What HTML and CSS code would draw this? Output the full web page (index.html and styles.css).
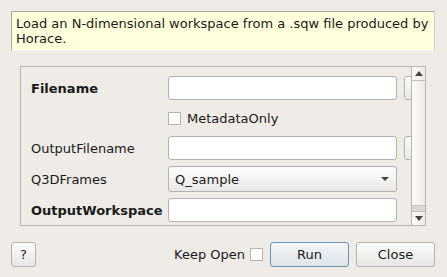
FILE: index.html
```html
<!DOCTYPE html>
<html lang="en">
<head>
  <meta charset="UTF-8" />
  <title>LoadSQW</title>
  <link rel="stylesheet" href="styles.css">
</head>
<body>
  <div class="desc">Load an N-dimensional workspace from a .sqw file produced by Horace.</div>

  <div class="scroll">
    <div class="viewport">
      <div class="form">
        <label class="bold">Filename</label>
        <input type="text" class="field">
        <button class="browse"></button>

        <span></span>
        <label class="check"><span class="box"></span>MetadataOnly</label>
        <span></span>

        <label>OutputFilename</label>
        <input type="text" class="field">
        <button class="browse"></button>

        <label>Q3DFrames</label>
        <div class="combo">Q_sample<span class="arrow"></span></div>
        <span></span>

        <label class="bold">OutputWorkspace</label>
        <input type="text" class="field">
        <span></span>
      </div>
    </div>
    <div class="scrollbar">
      <div class="sb-btn up"><span></span></div>
      <div class="sb-thumb"></div>
      <div class="sb-gap"></div>
      <div class="sb-btn down"><span></span></div>
    </div>
  </div>

  <div class="bottom">
    <button class="btn help">?</button>
    <span class="spacer"></span>
    <label class="keep">Keep Open<span class="box"></span></label>
    <button class="btn run">Run</button>
    <button class="btn">Close</button>
  </div>
</body>
</html>
```

FILE: styles.css
```css
* { box-sizing: border-box; }
body {
  margin: 0; background: #efebe7; color: #1a1a1a;
  font-family: 'DejaVu Sans', sans-serif; font-size: 13px;
  width: 447px; height: 277px; overflow: hidden;
}
.desc {
  margin: 11px 12px 0 11px; height: 40px; padding: 4px 4px 0 4px;
  line-height: 15px; background: #ffffdc;
  border: 1px solid #a8a8a8; border-right-color: #d0d0d0; border-bottom-color: #f6f6f6;
}
.scroll {
  margin: 15px 21px 0 20px; height: 160px;
  display: flex; border: 1px solid #b8b5b2;
}
.viewport {
  flex: 1; overflow: hidden; padding: 9px 0 0 10px;
}
.form {
  display: grid; grid-template-columns: 130px 229px 25px;
  grid-template-rows: 24px 24px 24px 26px 24px;
  row-gap: 6px; column-gap: 7px;
  width: 398px; align-items: center;
}
.form label { white-space: nowrap; }
.bold { font-weight: bold; }
.field {
  height: 24px; width: 229px; margin: 0;
  border: 1px solid #b4b1ae; border-radius: 3px; background: #fff;
}
.browse {
  height: 24px; width: 25px; margin: 0; padding: 0;
  border: 1px solid #b4b1ae; border-radius: 3px;
  background: linear-gradient(#fbfbfa, #ebe9e7);
}
.check { display: flex; align-items: center; gap: 6px; }
.box {
  display: inline-block; width: 13px; height: 13px;
  border: 1px solid #b4b1ae; background: #fff;
}
.combo {
  height: 26px; display: flex; align-items: center; justify-content: space-between;
  padding: 0 7px 0 6px; border: 1px solid #b4b1ae; border-radius: 3px;
  background: linear-gradient(#fdfdfd, #ebe9e7);
}
.arrow {
  width: 0; height: 0; border-left: 4px solid transparent;
  border-right: 4px solid transparent; border-top: 4px solid #444;
}
.scrollbar {
  width: 14px; display: flex; flex-direction: column;
  border-left: 1px solid #b8b5b2;
}
.sb-btn {
  display: flex; align-items: center; justify-content: center;
  background: linear-gradient(90deg, #fdfdfd, #ece9e6);
}
.sb-btn.up { border-bottom: 1px solid #c4c1be; height: 14px; }
.sb-btn.down { border-top: 1px solid #c4c1be; height: 14px; }
.sb-btn span {
  width: 0; height: 0; border-left: 4px solid transparent; border-right: 4px solid transparent;
}
.up span { border-bottom: 5px solid #444; }
.down span { border-top: 5px solid #444; }
.sb-thumb { flex: 1; background: linear-gradient(90deg, #fdfdfd, #ebe8e5); }
.sb-gap { height: 6px; background: #dad7d4; border-top: 1px solid #c8c5c2; }
.bottom {
  display: flex; align-items: center; margin: 16px 12px 0 11px; height: 25px;
}
.spacer { flex: 1; }
.btn {
  height: 25px; width: 79px; margin: 0 0 0 7px; padding: 0;
  font: inherit; color: #1a1a1a;
  border: 1px solid #b4b1ae; border-radius: 3px;
  background: linear-gradient(#fbfbfa, #e9e7e5);
}
.btn.help { width: 25px; margin: 0; }
.btn.run { border-color: #6d93b4; background: linear-gradient(#f3f5f7, #dfe5ea); }
.keep { display: flex; align-items: center; gap: 5px; }
```
